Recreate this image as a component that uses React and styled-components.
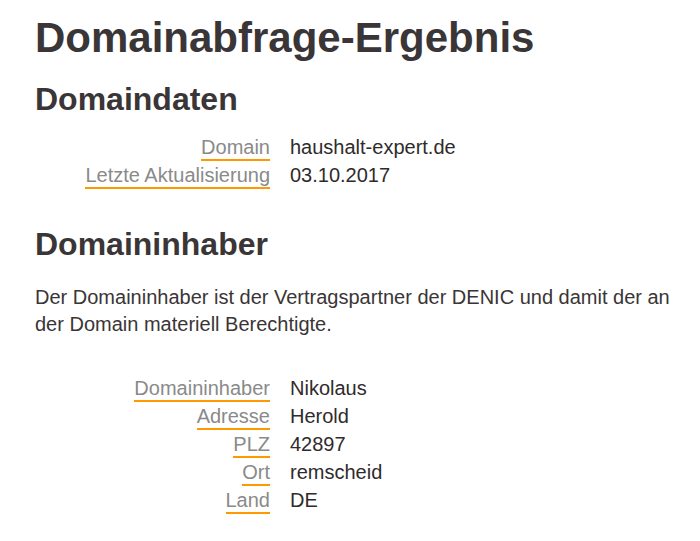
import styled, { createGlobalStyle } from 'styled-components'

const GlobalStyle = createGlobalStyle`
  body {
    margin: 0;
    background: #fff;
    font-family: "Liberation Sans", Arial, sans-serif;
    color: #3a3536;
  }
`

const Page = styled.div`
  padding: 13px 0 0 35px;
`

const Title = styled.h1`
  margin: 0;
  font-size: 42px;
  font-weight: 700;
  line-height: 50px;
  color: #3a3536;
`

const SectionTitle = styled.h2`
  margin: ${(p) => (p.$first ? '17px' : '34px')} 0 0;
  font-size: 32px;
  font-weight: 700;
  line-height: 38px;
  color: #3a3536;
`

const Intro = styled.p`
  margin: 21px 0 0;
  font-size: 20px;
  line-height: 27px;
  color: #3a3536;
`

const Facts = styled.dl`
  display: grid;
  grid-template-columns: 235px 1fr;
  column-gap: 20px;
  row-gap: 0;
  margin: ${(p) => p.$top || '17px'} 0 0;
`

const Label = styled.dt`
  justify-self: end;
  font-size: 20px;
  line-height: 24px;
  height: 26px;
  color: #8a8a8a;
  border-bottom: 2px solid #ff9900;
  box-sizing: border-box;
  margin-bottom: 2px;
`

const Value = styled.dd`
  margin: 0;
  font-size: 20px;
  line-height: 24px;
  color: #2f2b2c;
`

const domainData = [
  ['Domain', 'haushalt-expert.de'],
  ['Letzte Aktualisierung', '03.10.2017'],
]

const ownerData = [
  ['Domaininhaber', 'Nikolaus'],
  ['Adresse', 'Herold'],
  ['PLZ', '42897'],
  ['Ort', 'remscheid'],
  ['Land', 'DE'],
]

function FactList({ items, top }) {
  return (
    <Facts $top={top}>
      {items.map(([label, value]) => [
        <Label key={label + '-l'}>{label}</Label>,
        <Value key={label + '-v'}>{value}</Value>,
      ])}
    </Facts>
  )
}

export default function App() {
  return (
    <Page>
      <GlobalStyle />
      <Title>Domainabfrage-Ergebnis</Title>
      <SectionTitle $first>Domaindaten</SectionTitle>
      <FactList items={domainData} />
      <SectionTitle>Domaininhaber</SectionTitle>
      <Intro>
        Der Domaininhaber ist der Vertragspartner der DENIC und damit der an
        der Domain materiell Berechtigte.
      </Intro>
      <FactList items={ownerData} top="38px" />
    </Page>
  )
}
